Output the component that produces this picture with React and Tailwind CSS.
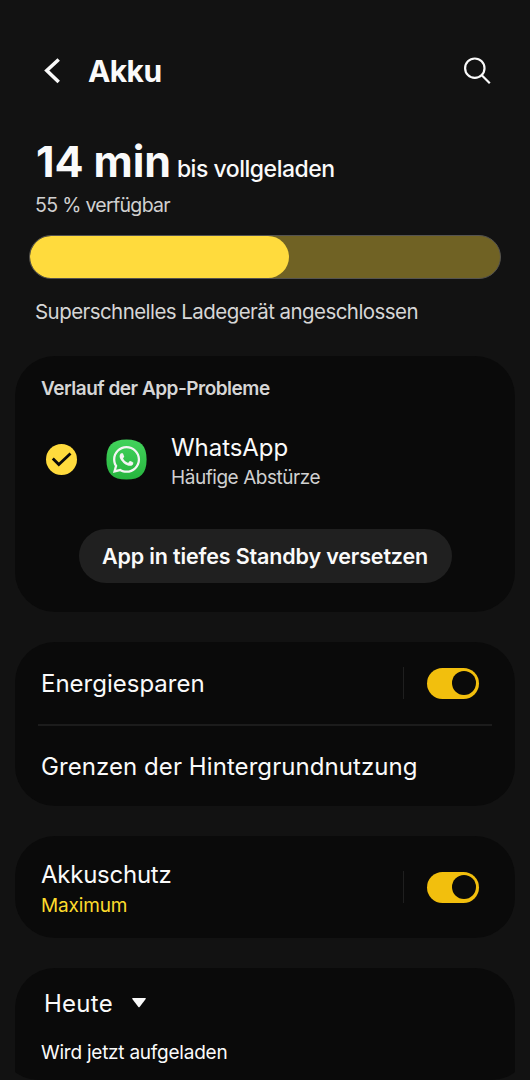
import { useState } from 'react'
import { FaWhatsapp } from 'react-icons/fa'

function Card({ children, className = '' }) {
  return <section className={`mx-[15px] rounded-[40px] bg-[#0a0a0a] ${className}`}>{children}</section>
}

/* Toggle with the thin separator on its left */
function Toggle({ label }) {
  const [on, setOn] = useState(true)
  return (
    <div className="flex items-center">
      <span className="h-8 w-px bg-[#1f1f1f]" />
      <button
        type="button"
        role="switch"
        aria-checked={on}
        aria-label={label}
        onClick={() => setOn(p => !p)}
        className={`ml-[23px] flex h-[31px] w-[52px] items-center rounded-full px-[3px] ${on ? 'justify-end bg-[#f2bf0d]' : 'justify-start bg-[#555555]'}`}
      >
        <span className="size-6 rounded-full bg-[#0a0a0a]" />
      </button>
    </div>
  )
}

/* Green squircle app icon */
function WhatsAppIcon() {
  return (
    <span className="ml-[29px] grid size-[41px] place-items-center">
      <svg className="col-start-1 row-start-1" width="41" height="41" viewBox="0 0 41 41">
        <defs>
          <linearGradient id="wa" x1="0" y1="0" x2="0" y2="1">
            <stop offset="0" stopColor="#43d35c" />
            <stop offset="1" stopColor="#26b43e" />
          </linearGradient>
        </defs>
        <path d="M20.5.4C34.5.4 40.6 6.5 40.6 20.5S34.5 40.6 20.5 40.6.4 34.5.4 20.5 6.5.4 20.5.4z" fill="url(#wa)" />
      </svg>
      <FaWhatsapp className="col-start-1 row-start-1" size={31} color="#f4f4f4" />
    </span>
  )
}

export default function App() {
  const level = 55

  return (
    <div className="h-[1080px] w-[530px] overflow-hidden bg-[#121212] font-['Inter',sans-serif] text-[#fafafa]">
      <div className="h-full overflow-hidden rounded-b-[38px]">
        {/* Header */}
        <header className="flex h-[136px] items-start pt-[46px]">
          <div className="flex h-[50px] w-full items-center pr-[39px] pl-[43px]">
            <svg width="18" height="28" viewBox="0 0 18 28" fill="none" stroke="currentColor" strokeWidth="3.6">
              <path d="M15.7 2.500 3.8 13.5 15.7 25" />
            </svg>
            <h1 className="ml-[27px] flex-1 text-[30px] leading-[50px] font-bold tracking-[-0.6px]">Akku</h1>
            <svg width="28" height="28" viewBox="0 0 28 28" fill="none" stroke="currentColor" strokeWidth="2.2">
              <circle cx="11.8" cy="11.2" r="9.7" />
              <path d="m18.8 18.2 8 8" />
            </svg>
          </div>
        </header>

        {/* Charge status */}
        <div className="flex h-[54px] items-baseline pl-9 whitespace-nowrap">
          <span className="text-[43px] leading-[50px] font-bold tracking-[-0.1px]">14 min</span>
          <span className="ml-[6px] text-[23px] leading-[30px] font-medium tracking-[-0.48px]">bis vollgeladen</span>
        </div>
        <p className="pt-px pl-[35px] text-[19.5px] leading-7 tracking-[-0.68px] text-[#d0d0d0]">55 % verfügbar</p>
        <div className="mx-[29px] mt-4 h-11 overflow-hidden rounded-full border border-[#55534f] bg-[#706224]">
          <div className="h-full rounded-full bg-[#ffdb3d]" style={{ width: `${level}%` }} />
        </div>
        <p className="mt-[19px] pl-[35px] text-[20.5px] leading-7 tracking-[-0.56px] whitespace-nowrap text-[#d6d6d6]">
          Superschnelles Ladegerät angeschlossen
        </p>

        {/* App issues */}
        <Card className="mt-[29.5px] h-[256.5px] overflow-hidden">
          <h2 className="mt-[19px] pl-[26px] text-[19px] leading-7 font-semibold tracking-[-0.5px] text-[#d6d6d6]">
            Verlauf der App-Probleme
          </h2>
          <div className="mt-[27px] flex h-[60px] items-center pl-[31px]">
            <span className="flex size-[31px] items-center justify-center rounded-full bg-[#ffdb3d]">
              <svg width="21" height="17" viewBox="0 0 21 17" fill="none" stroke="#0a0a0a" strokeWidth="2.8">
                <path d="m1.8 7.5 6 6L19.5 2.5" />
              </svg>
            </span>
            <WhatsAppIcon />
            <div className="ml-[24px] pt-[5px]">
              <p className="text-[24px] leading-8 tracking-[-0.05px]">WhatsApp</p>
              <p className="text-[19px] leading-7 tracking-[-0.45px] text-[#d0d0d0]">Häufige Abstürze</p>
            </div>
          </div>
          <div className="mt-[39px] flex justify-center">
            <button type="button" className="h-[54px] w-[373px] rounded-full bg-[#202020] pt-0.5 text-[21.5px] font-semibold tracking-[-0.15px] whitespace-nowrap">
              App in tiefes Standby versetzen
            </button>
          </div>
        </Card>

        {/* Power saving */}
        <Card className="mt-[30px] h-[164px]">
          <div className="flex h-[82px] items-center justify-between pr-9 pl-[26px]">
            <span className="pt-[2px] text-[24px] leading-8">Energiesparen</span>
            <Toggle label="Energiesparen" />
          </div>
          <div className="mx-[23px] h-0.5 bg-[#1c1c1c]" />
          <div className="flex h-[80px] items-center pl-[26px]">
            <span className="pt-[2px] text-[24px] leading-8 tracking-[0.07px] whitespace-nowrap">Grenzen der Hintergrundnutzung</span>
          </div>
        </Card>

        {/* Battery protection */}
        <Card className="mt-[30px] flex h-[102px] items-center justify-between pr-9 pl-[26px]">
          <div className="mt-[5px]">
            <p className="text-[24px] leading-8 tracking-[-0.25px]">Akkuschutz</p>
            <p className="pt-px text-[19px] leading-7 tracking-[-0.15px] text-[#fddc2c]">Maximum</p>
          </div>
          <Toggle label="Akkuschutz" />
        </Card>

        {/* Usage today */}
        <Card className="mt-[30px] h-[200px] overflow-hidden">
          <div className="mt-[20px] flex h-8 items-center pl-[29px]">
            <span className="text-[24px] leading-8 tracking-[0.25px]">Heute</span>
            <svg className="mb-[2px] ml-[19px]" width="14" height="10" viewBox="0 0 14 10" fill="currentColor">
              <path d="M.8 0h12.4q1 .3.5 1L7.6 9q-.6.7-1.2 0L.3 1Q-.2.3.8 0z" />
            </svg>
          </div>
          <p className="mt-[19px] pl-[26px] text-[19px] leading-7 tracking-[-0.24px]">Wird jetzt aufgeladen</p>
        </Card>
      </div>
    </div>
  )
}
